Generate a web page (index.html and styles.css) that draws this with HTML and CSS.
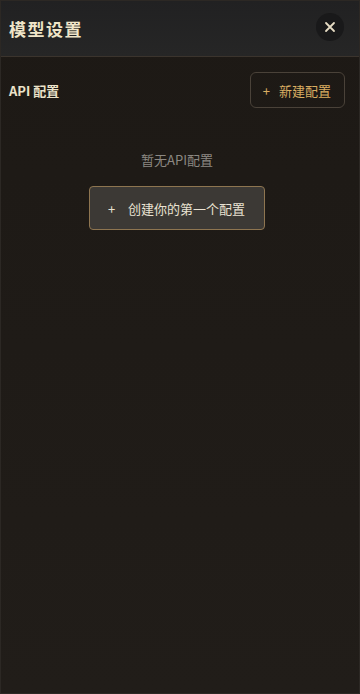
FILE: index.html
```html
<!DOCTYPE html>
<html lang="zh">
<head>
  <meta charset="UTF-8" />
  <meta name="viewport" content="width=device-width, initial-scale=1.0"/>
  <title>模型设置</title>
  <link rel="stylesheet" href="styles.css">
</head>
<body>

  <div class="panel">
    <!-- Header -->
    <div class="panel-header">
      <h2>模型设置</h2>
      <button class="close-btn" type="button">
        <svg width="12" height="12" viewBox="0 0 12 12">
          <path d="M2 2 L10 10 M10 2 L2 10" stroke="#e6dcc4" stroke-width="1.8" stroke-linecap="round"/>
        </svg>
      </button>
    </div>

    <!-- Body -->
    <div class="panel-body">
      <div class="section-row">
        <span class="section-title">API 配置</span>
        <button class="btn-outline" type="button"><span class="plus">+</span>新建配置</button>
      </div>

      <div class="empty">
        <p class="empty-text">暂无API配置</p>
        <button class="btn-create" type="button"><span class="plus">+</span>创建你的第一个配置</button>
      </div>
    </div>
  </div>

</body>
</html>
```

FILE: styles.css
```css
* {
  box-sizing: border-box;
  margin: 0;
  padding: 0;
  font-family: "Noto Sans CJK SC", "Noto Sans", sans-serif;
}

body {
  width: 360px;
  height: 694px;
  background: #201c18;
  overflow: hidden;
}

.panel {
  height: 100%;
  display: flex;
  flex-direction: column;
  background: linear-gradient(to bottom, #1d1915, #211d19);
  border: 1px solid #2c2824;
}

.panel-header {
  height: 56px;
  display: flex;
  align-items: center;
  justify-content: space-between;
  padding: 0 15px 0 8px;
  background: linear-gradient(to bottom, #212122, #262626);
  border-bottom: 1px solid #3b342d;
}

.panel-header h2 {
  font-size: 17px;
  font-weight: 700;
  letter-spacing: 1.5px;
  color: #efe5c8;
}

.close-btn {
  width: 28px;
  height: 28px;
  margin-top: -4px;
  border: none;
  border-radius: 50%;
  background: #19191a;
  display: flex;
  align-items: center;
  justify-content: center;
  cursor: pointer;
}

.panel-body {
  padding: 15px 14px 0 8px;
}

.section-row {
  display: flex;
  align-items: center;
  justify-content: space-between;
}

.section-title {
  font-size: 13px;
  font-weight: 700;
  color: #ebe2c9;
}

.btn-outline {
  height: 36px;
  padding: 0 13px 0 12px;
  background: transparent;
  border: 1px solid #4a4239;
  border-radius: 6px;
  color: #d9ad62;
  font-size: 13px;
  cursor: pointer;
}

.plus {
  display: inline-block;
  margin-right: 9px;
  font-size: 13px;
}

.empty {
  display: flex;
  flex-direction: column;
  align-items: center;
  padding-top: 42px;
}

.empty-text {
  font-size: 13px;
  color: #8c8882;
}

.btn-create {
  margin-top: 17px;
  height: 44px;
  padding: 0 19px 0 18px;
  background: #3c3935;
  border: 1px solid #8e7550;
  border-radius: 4px;
  color: #e9e2d2;
  font-size: 13px;
  cursor: pointer;
}

.btn-create .plus {
  margin-right: 13px;
}
```
